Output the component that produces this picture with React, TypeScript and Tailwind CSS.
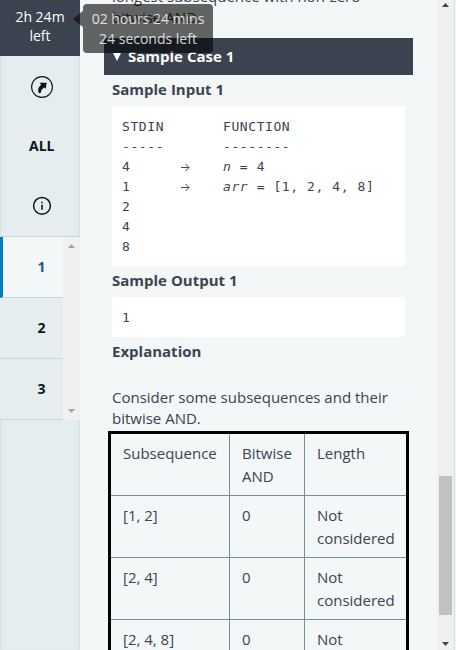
import React from "react";

const rows = [
  ["[1, 2]", "0", "Not considered"],
  ["[2, 4]", "0", "Not considered"],
  ["[2, 4, 8]", "0", "Not considered"],
];

const mono = "font-['DejaVu_Sans_Mono',monospace]";

function Line({ left, arrow, right }: { left: string; arrow?: boolean; right?: React.ReactNode }) {
  return (
    <div className="flex h-5 whitespace-pre">
      <span className="w-[59px]">{left}</span>
      <span className="flex w-[42px] items-center">
        {arrow && (
          <svg width="9" height="9" viewBox="0 0 9 9" fill="none" stroke="#454c59">
            <path d="M0 4.5H8M4.5 1L8 4.5L4.5 8" />
          </svg>
        )}
      </span>
      <span>{right}</span>
    </div>
  );
}

function Sidebar() {
  return (
    <aside className="flex w-20 shrink-0 flex-col bg-[#e5edee] text-[#0e141e] shadow-[inset_3px_0_3px_-2px_#d5dfe1,inset_-3px_0_3px_-2px_#d5dfe1]">
      <div className="h-14 bg-[#3b4250] pt-[7px] text-center text-[14px] leading-[19px] text-white">
        2h 24m
        <br />
        left
      </div>
      <div className="flex h-[181px] flex-col items-center border-b border-[#c8d6d9]">
        <div className="mt-5 flex h-[22px] w-full pl-[31px]">
          <svg width="22" height="22" viewBox="0 0 22 22" fill="none">
            <circle cx="11" cy="11" r="10.4" stroke="#0e141e" strokeWidth="1.1" />
            <path d="M8.6 6.8H15.6L14.8 12.8L13.2 11.6C11.2 12.8 10.4 13.8 9.6 17H7.8C6.6 14 7 11.6 10.2 8.8Z" fill="#0e141e" />
          </svg>
        </div>
        <div className="mt-[38px] h-5 w-full pl-[29px] text-[14px] leading-5 font-bold">ALL</div>
        <div className="mt-[40px] w-full pl-[32px]">
          <svg width="20" height="20" viewBox="0 0 20 20" fill="none">
            <circle cx="10" cy="9.8" r="8.4" stroke="#0e141e" strokeWidth="1.5" />
            <path d="M10 8.7V13.7M10 5.8V7.2" stroke="#39434c" strokeWidth="2" />
          </svg>
        </div>
      </div>
      <div className="flex h-[183px] bg-[#e5edee]">
        <div className="flex w-[63px] flex-col text-[14px] leading-5 font-bold">
          <div className="h-[61px] border-b border-l-3 border-b-[#c8d6d9] border-l-[#097bbf] bg-[#f3f7f8] pt-[20px] pl-[34.5px] text-[#1d5884]">1</div>
          <div className="h-[61px] border-b border-[#c8d6d9] pt-[20px] pl-[37.5px]">2</div>
          <div className="h-[61px] border-b border-[#c8d6d9] pt-[20px] pl-[37.5px]">3</div>
        </div>
        <div className="flex w-[17px] flex-col items-center justify-between bg-[#f0f0f0] py-[7px]">
          <svg width="7" height="4" viewBox="0 0 7 4"><path d="M0 4L3.5 0L7 4Z" fill="#a3a3a3" /></svg>
          <svg width="7" height="4" viewBox="0 0 7 4"><path d="M0 0L3.5 4L7 0Z" fill="#a3a3a3" /></svg>
        </div>
      </div>
    </aside>
  );
}

export default function App() {
  return (
    <div className="relative flex h-[650px] w-[456px] overflow-hidden bg-[#f3f7f8] font-['Open_Sans','Noto_Sans',sans-serif] text-[15px] text-[#3d4350]">
      <Sidebar />
      <main className="h-[650px] w-[357px] shrink-0 overflow-hidden pl-6">
        <div className="-mt-[14px] h-[52px] pl-2 leading-[21px]">
          longest subsequence with non-zero
          <br />
          bitwise AND.
        </div>
        <div className="flex h-[37px] w-[309px] items-center bg-[#3b4250] pl-[9px] text-[15px] font-bold text-white">
          <svg width="8" height="8" viewBox="0 0 8 8" className="mr-[7px]"><path d="M0 0H8L4 8Z" fill="white" /></svg>
          Sample Case 1
        </div>
        <div className="w-[301px] pl-2">
          <h3 className="h-[31px] pt-[4px] text-[15px] leading-[21px] font-bold">Sample Input 1</h3>
          <div className={`h-[160px] rounded-[2px] bg-white px-[10px] pt-[11px] text-[13px] leading-5 tracking-[0.58px] ${mono}`}>
            <Line left="STDIN" right="FUNCTION" />
            <Line left="-----" right="--------" />
            <Line left="4" arrow right={<><i>n</i> = 4</>} />
            <Line left="1" arrow right={<><i>arr</i> = [1, 2, 4, 8]</>} />
            <Line left="2" />
            <Line left="4" />
            <Line left="8" />
          </div>
          <h3 className="h-[31px] pt-[4px] leading-[21px] font-bold">Sample Output 1</h3>
          <div className={`h-[40px] rounded-[2px] bg-white px-[10px] pt-[11px] text-[13px] leading-5 tracking-[0.58px] ${mono}`}>1</div>
          <h3 className="h-[50px] pt-[4px] leading-[21px] font-bold">Explanation</h3>
          <p className="h-[44px] whitespace-nowrap leading-[21px]">
            Consider some subsequences and their
            <br />
            bitwise AND.
          </p>
        </div>
        <div className="ml-1 w-[301px] border-3 border-black leading-[23px]">
          <div className="grid h-[62px] grid-cols-[119px_75px_101px] border-b border-[#738f93]">
            <div className="border-r border-[#738f93] px-3 pt-2">Subsequence</div>
            <div className="border-r border-[#738f93] px-3 pt-2">Bitwise AND</div>
            <div className="px-3 pt-2">Length</div>
          </div>
          {rows.map((r) => (
            <div key={r[0]} className="grid h-[62px] grid-cols-[119px_75px_101px] border-b border-[#738f93]">
              <div className="border-r border-[#738f93] px-3 pt-2">{r[0]}</div>
              <div className="border-r border-[#738f93] px-3 pt-2">{r[1]}</div>
              <div className="px-3 pt-2">{r[2]}</div>
            </div>
          ))}
        </div>
      </main>
      <div className="flex w-[17px] flex-col items-center bg-[#f0f0f0] pt-[3px]">
        <svg width="7" height="4" viewBox="0 0 7 4"><path d="M0 4L3.5 0L7 4Z" fill="#454545" /></svg>
        <div className="mt-[469px] h-[139px] w-[13px] bg-[#c1c1c1]" />
        <svg className="mt-[27px]" width="7" height="4" viewBox="0 0 7 4"><path d="M0 0L3.5 4L7 0Z" fill="#454545" /></svg>
      </div>
      <div className="w-px bg-[#d6e1e5]" />
      <div className="absolute top-[4px] left-[83px] h-[49px] w-[130px] rounded-[4px] bg-black/60 pt-[5px] text-center text-[14px] leading-5 text-white/80">
        02 hours 24 mins
        <br />
        24 seconds left
        <svg className="absolute top-[7px] -left-[10px]" width="10" height="16" viewBox="0 0 10 16">
          <path d="M7 2L0 8L7 14Z" fill="#1c2027" />
          <path d="M7 2L10 0V16L7 14Z" fill="#616364" />
        </svg>
      </div>
    </div>
  );
}
